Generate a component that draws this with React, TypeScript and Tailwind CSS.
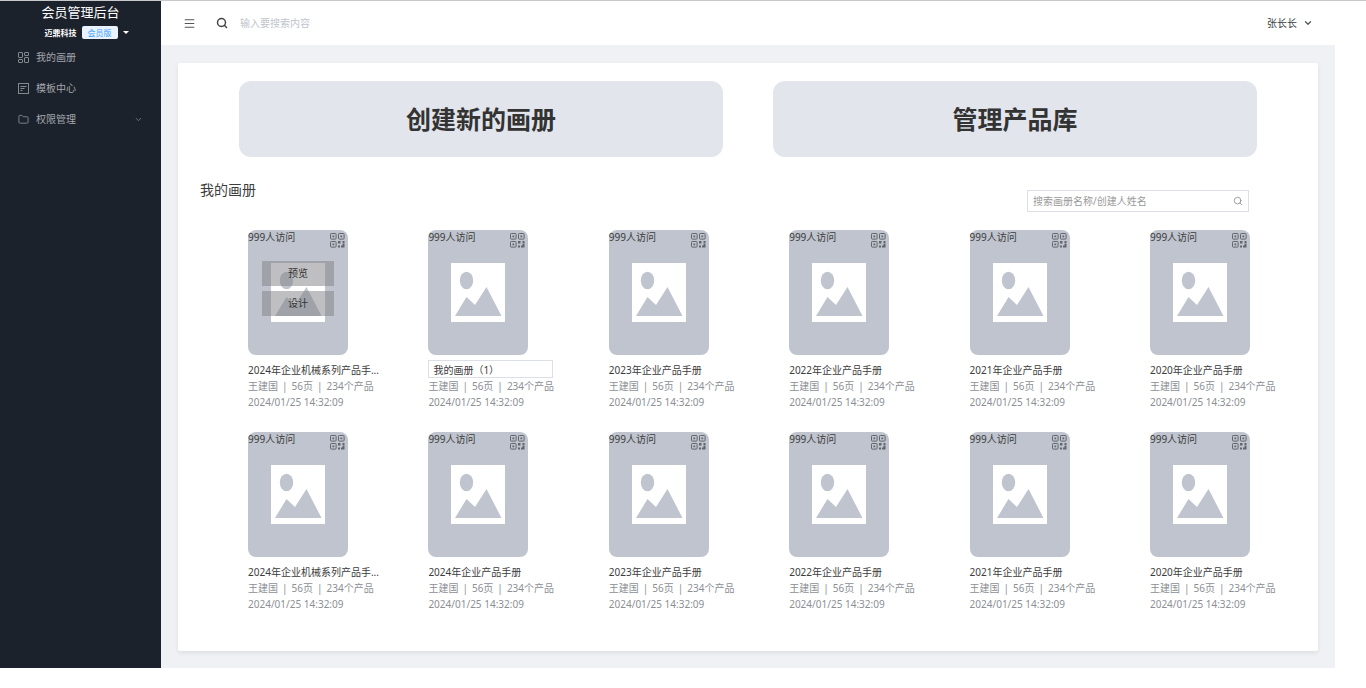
import React from 'react';
import { ChevronDown, Folder, Menu, Search } from 'lucide-react';

interface Album {
  id: number;
  title: string;
  hovered?: boolean;
  editing?: boolean;
}

const albums: Album[] = [
  { id: 1, title: '2024年企业机械系列产品手...', hovered: true },
  { id: 2, title: '我的画册（1）', editing: true },
  { id: 3, title: '2023年企业产品手册' },
  { id: 4, title: '2022年企业产品手册' },
  { id: 5, title: '2021年企业产品手册' },
  { id: 6, title: '2020年企业产品手册' },
  { id: 7, title: '2024年企业机械系列产品手...' },
  { id: 8, title: '2024年企业产品手册' },
  { id: 9, title: '2023年企业产品手册' },
  { id: 10, title: '2022年企业产品手册' },
  { id: 11, title: '2021年企业产品手册' },
  { id: 12, title: '2020年企业产品手册' },
];

function DashboardIcon() {
  return (
    <svg width="11" height="11" viewBox="0 0 11 11" fill="none" stroke="currentColor" className="text-[#85898f]" aria-hidden="true">
      <rect x="0.5" y="0.5" width="4" height="5" rx="0.5" />
      <rect x="6.5" y="0.5" width="4" height="3" rx="0.5" />
      <rect x="0.5" y="7.5" width="4" height="3" rx="0.5" />
      <rect x="6.5" y="5.5" width="4" height="5" rx="0.5" />
    </svg>
  );
}

function TemplateIcon() {
  return (
    <svg width="11" height="11" viewBox="0 0 11 11" fill="none" stroke="currentColor" className="text-[#85898f]" aria-hidden="true">
      <rect x="0.5" y="0.5" width="10" height="10" />
      <path d="M2.5 3.5h6M2.5 5.5h4M2.5 7.5h2" />
    </svg>
  );
}

function QrIcon() {
  return (
    <svg width="15" height="15" viewBox="0 0 15 15" fill="none" stroke="currentColor" aria-hidden="true">
      <rect x="0.5" y="0.5" width="5.6" height="5.6" rx="0.8" />
      <rect x="8.5" y="0.5" width="5.6" height="5.6" rx="0.8" />
      <rect x="0.5" y="8.5" width="5.6" height="5.6" rx="0.8" />
      <path
        d="M2.4 2.4h1.8v1.8h-1.8zM10.4 2.4h1.8v1.8h-1.8zM2.4 10.4h1.8v1.8h-1.8zM8 8h2.5v2.5h-2.5zM12.5 8h2v2h-2zM8 12.5h2v2h-2zM11 12.5h1.5v-2h2v4h-3.5z"
        fill="currentColor"
        stroke="none"
      />
    </svg>
  );
}

function Placeholder() {
  return (
    <svg width="54" height="59" viewBox="0 0 54 59" aria-hidden="true">
      <rect width="54" height="59" fill="#fff" />
      <ellipse cx="15.5" cy="17.5" rx="6.7" ry="8.7" fill="#bfc4ce" />
      <path d="M4 53 15.5 34l8.5 8L35.5 24 50.5 53z" fill="#bfc4ce" />
    </svg>
  );
}

function AlbumCard({ album }: { album: Album }) {
  return (
    <li className="w-[130px]">
      <div className="relative flex h-[125px] w-[100px] flex-col rounded-lg bg-[#bfc4ce]">
        <div className="flex h-[33px] items-start justify-between pt-[2px] pr-[3px]">
          <span className="leading-[10px] text-[#3c3c3c]">999人访问</span>
          <button type="button" aria-label="二维码" className="mt-px text-[#62656b]">
            <QrIcon />
          </button>
        </div>
        <div className="flex justify-center">
          <Placeholder />
        </div>
        {album.hovered && (
          <div className="absolute inset-x-[14px] top-[31px] flex flex-col gap-[5px]">
            <button type="button" className="h-[25px] bg-[#808084]/50 text-[#333]">预览</button>
            <button type="button" className="h-[25px] bg-[#808084]/50 text-[#333]">设计</button>
          </div>
        )}
      </div>
      <div className="mt-[5px] flex h-[18px] items-end">
        {album.editing ? (
          <input
            aria-label="画册名称"
            defaultValue={album.title}
            className="h-[18px] w-[125px] border border-[#dcdfe6] bg-white px-1 text-[#3c3c3c] outline-none"
          />
        ) : (
          <h3 className="whitespace-nowrap text-[#3c3c3c]">{album.title}</h3>
        )}
      </div>
      <p className="leading-[16px] whitespace-nowrap text-[#8c8f94]">
        王建国<span className="mx-1">|</span>56页<span className="mx-1">|</span>234个产品
      </p>
      <p className="leading-[16px] whitespace-nowrap text-[#8c8f94]">2024/01/25 14:32:09</p>
    </li>
  );
}

function Sidebar() {
  return (
    <aside className="w-[161px] shrink-0 bg-[#1c222c]">
      <div className="flex h-[41px] flex-col items-center text-white">
        <h1 className="pt-px text-[13px] leading-[20px]">会员管理后台</h1>
        <button type="button" className="mt-1 flex items-center gap-[5px] pl-3 text-[8px] leading-[13px]">
          <span className="font-bold">迈鼎科技</span>
          <span className="w-9 rounded-xs bg-[#e8f3ff] text-center text-[#409eff]">会员版</span>
          <span className="border-x-3 border-t-3 border-x-transparent border-t-white" />
        </button>
      </div>
      <nav className="text-[#a3a7ac]">
        <a href="#albums" className="flex h-[31px] items-center gap-[7px] px-[18px]">
          <DashboardIcon />
          我的画册
        </a>
        <a href="#templates" className="flex h-[31px] items-center gap-[7px] px-[18px]">
          <TemplateIcon />
          模板中心
        </a>
        <a href="#permissions" className="flex h-[31px] items-center gap-[7px] px-[18px]">
          <Folder size={11} strokeWidth={2} className="text-[#85898f]" />
          权限管理
          <ChevronDown size={9} className="ml-auto text-[#85898f]" />
        </a>
      </nav>
    </aside>
  );
}

function Header() {
  return (
    <header className="flex h-[44px] items-center bg-white px-[22px]">
      <button type="button" aria-label="菜单" className="text-[#555]">
        <Menu size={13} strokeWidth={2} />
      </button>
      <label className="ml-[20px] flex flex-1 items-center gap-3 text-[#444]">
        <Search size={12} strokeWidth={3} />
        <input
          type="search"
          aria-label="搜索内容"
          placeholder="输入要搜索内容"
          className="w-[200px] outline-none placeholder:text-[#c0c4cc]"
        />
      </label>
      <button type="button" className="flex items-center gap-[6px] text-[#3c3c3c]">
        张长长
        <ChevronDown size={10} strokeWidth={3} className="text-[#555]" />
      </button>
    </header>
  );
}

export default function App() {
  return (
    <div className="border-t border-[#c8c9cb] bg-white font-['Noto_Sans','Noto_Sans_CJK_SC',sans-serif] text-[10px] leading-[15px]">
      <div className="mr-[31px] flex">
        <Sidebar />
        <div className="min-w-0 flex-1 bg-[#f0f1f5]">
          <Header />
          <main className="px-[17px] pt-[18px] pb-[17px]">
            <section className="rounded-xs bg-white pt-[18px] pb-[39px] shadow-[0_2px_4px_rgba(0,0,0,0.08)]">
              <div className="grid grid-cols-2 gap-[50px] px-[61px] text-[25px] leading-[36px] font-bold text-[#333]">
                <button type="button" className="h-[76px] rounded-xl bg-[#e2e5ec]">创建新的画册</button>
                <button type="button" className="h-[76px] rounded-xl bg-[#e2e5ec]">管理产品库</button>
              </div>
              <div className="flex items-end justify-between pt-[22px] pr-[69px] pl-[22px]">
                <h2 className="self-start text-[14px] leading-[22px] text-[#3c3c3c]">我的画册</h2>
                <label className="mt-[11px] flex h-[22px] w-[222px] items-center border border-[#dcdfe6] px-[5px] text-[#8c8f94]">
                  <input
                    type="search"
                    aria-label="搜索画册"
                    placeholder="搜索画册名称/创建人姓名"
                    className="min-w-0 flex-1 outline-none placeholder:text-[#999]"
                  />
                  <Search size={10} strokeWidth={2} />
                </label>
              </div>
              <ul className="grid grid-cols-[repeat(6,130px)] justify-between gap-y-[22px] pt-[18px] pr-[38px] pl-[70px]">
                {albums.map((album) => (
                  <AlbumCard key={album.id} album={album} />
                ))}
              </ul>
            </section>
          </main>
        </div>
      </div>
    </div>
  );
}
